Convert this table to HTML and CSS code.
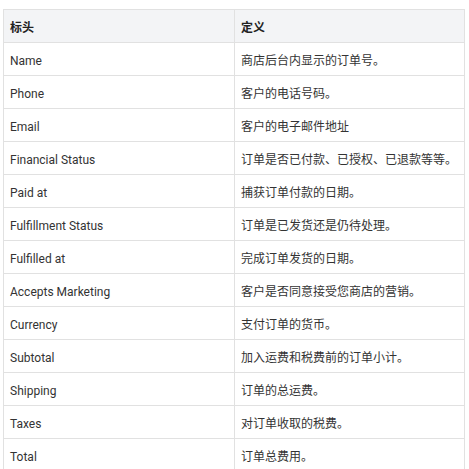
FILE: index.html
```html
<!DOCTYPE html>
<html lang="zh">
<head>
<meta charset="utf-8">
<link rel="stylesheet" href="styles.css">
</head>
<body>
<table class="fields">
  <thead>
    <tr><th>标头</th><th>定义</th></tr>
  </thead>
  <tbody>
    <tr><td>Name</td><td>商店后台内显示的订单号。</td></tr>
    <tr><td>Phone</td><td>客户的电话号码。</td></tr>
    <tr><td>Email</td><td>客户的电子邮件地址</td></tr>
    <tr><td>Financial Status</td><td>订单是否已付款、已授权、已退款等等。</td></tr>
    <tr><td>Paid at</td><td>捕获订单付款的日期。</td></tr>
    <tr><td>Fulfillment Status</td><td>订单是已发货还是仍待处理。</td></tr>
    <tr><td>Fulfilled at</td><td>完成订单发货的日期。</td></tr>
    <tr><td>Accepts Marketing</td><td>客户是否同意接受您商店的营销。</td></tr>
    <tr><td>Currency</td><td>支付订单的货币。</td></tr>
    <tr><td>Subtotal</td><td>加入运费和税费前的订单小计。</td></tr>
    <tr><td>Shipping</td><td>订单的总运费。</td></tr>
    <tr><td>Taxes</td><td>对订单收取的税费。</td></tr>
    <tr><td>Total</td><td>订单总费用。</td></tr>
  </tbody>
</table>
</body>
</html>
```
FILE: styles.css
```css
html, body {
  margin: 0;
  padding: 0;
  background: #ffffff;
}
body {
  padding: 9px 0 0 3px;
  font-family: Roboto, "Noto Sans CJK SC", sans-serif;
  font-size: 12px;
  color: #333333;
}
.fields {
  border-collapse: collapse;
  width: 462px;
  table-layout: fixed;
}
.fields th,
.fields td {
  border: 1px solid #e1e1e1;
  padding: 4px 6px 0;
  text-align: left;
  vertical-align: middle;
  box-sizing: border-box;
  height: 33px;
  line-height: 16px;
  white-space: nowrap;
}
.fields th:first-child,
.fields td:first-child {
  width: 231px;
}
.fields th {
  background: #f3f4f6;
  font-weight: bold;
  color: #222222;
}
```
